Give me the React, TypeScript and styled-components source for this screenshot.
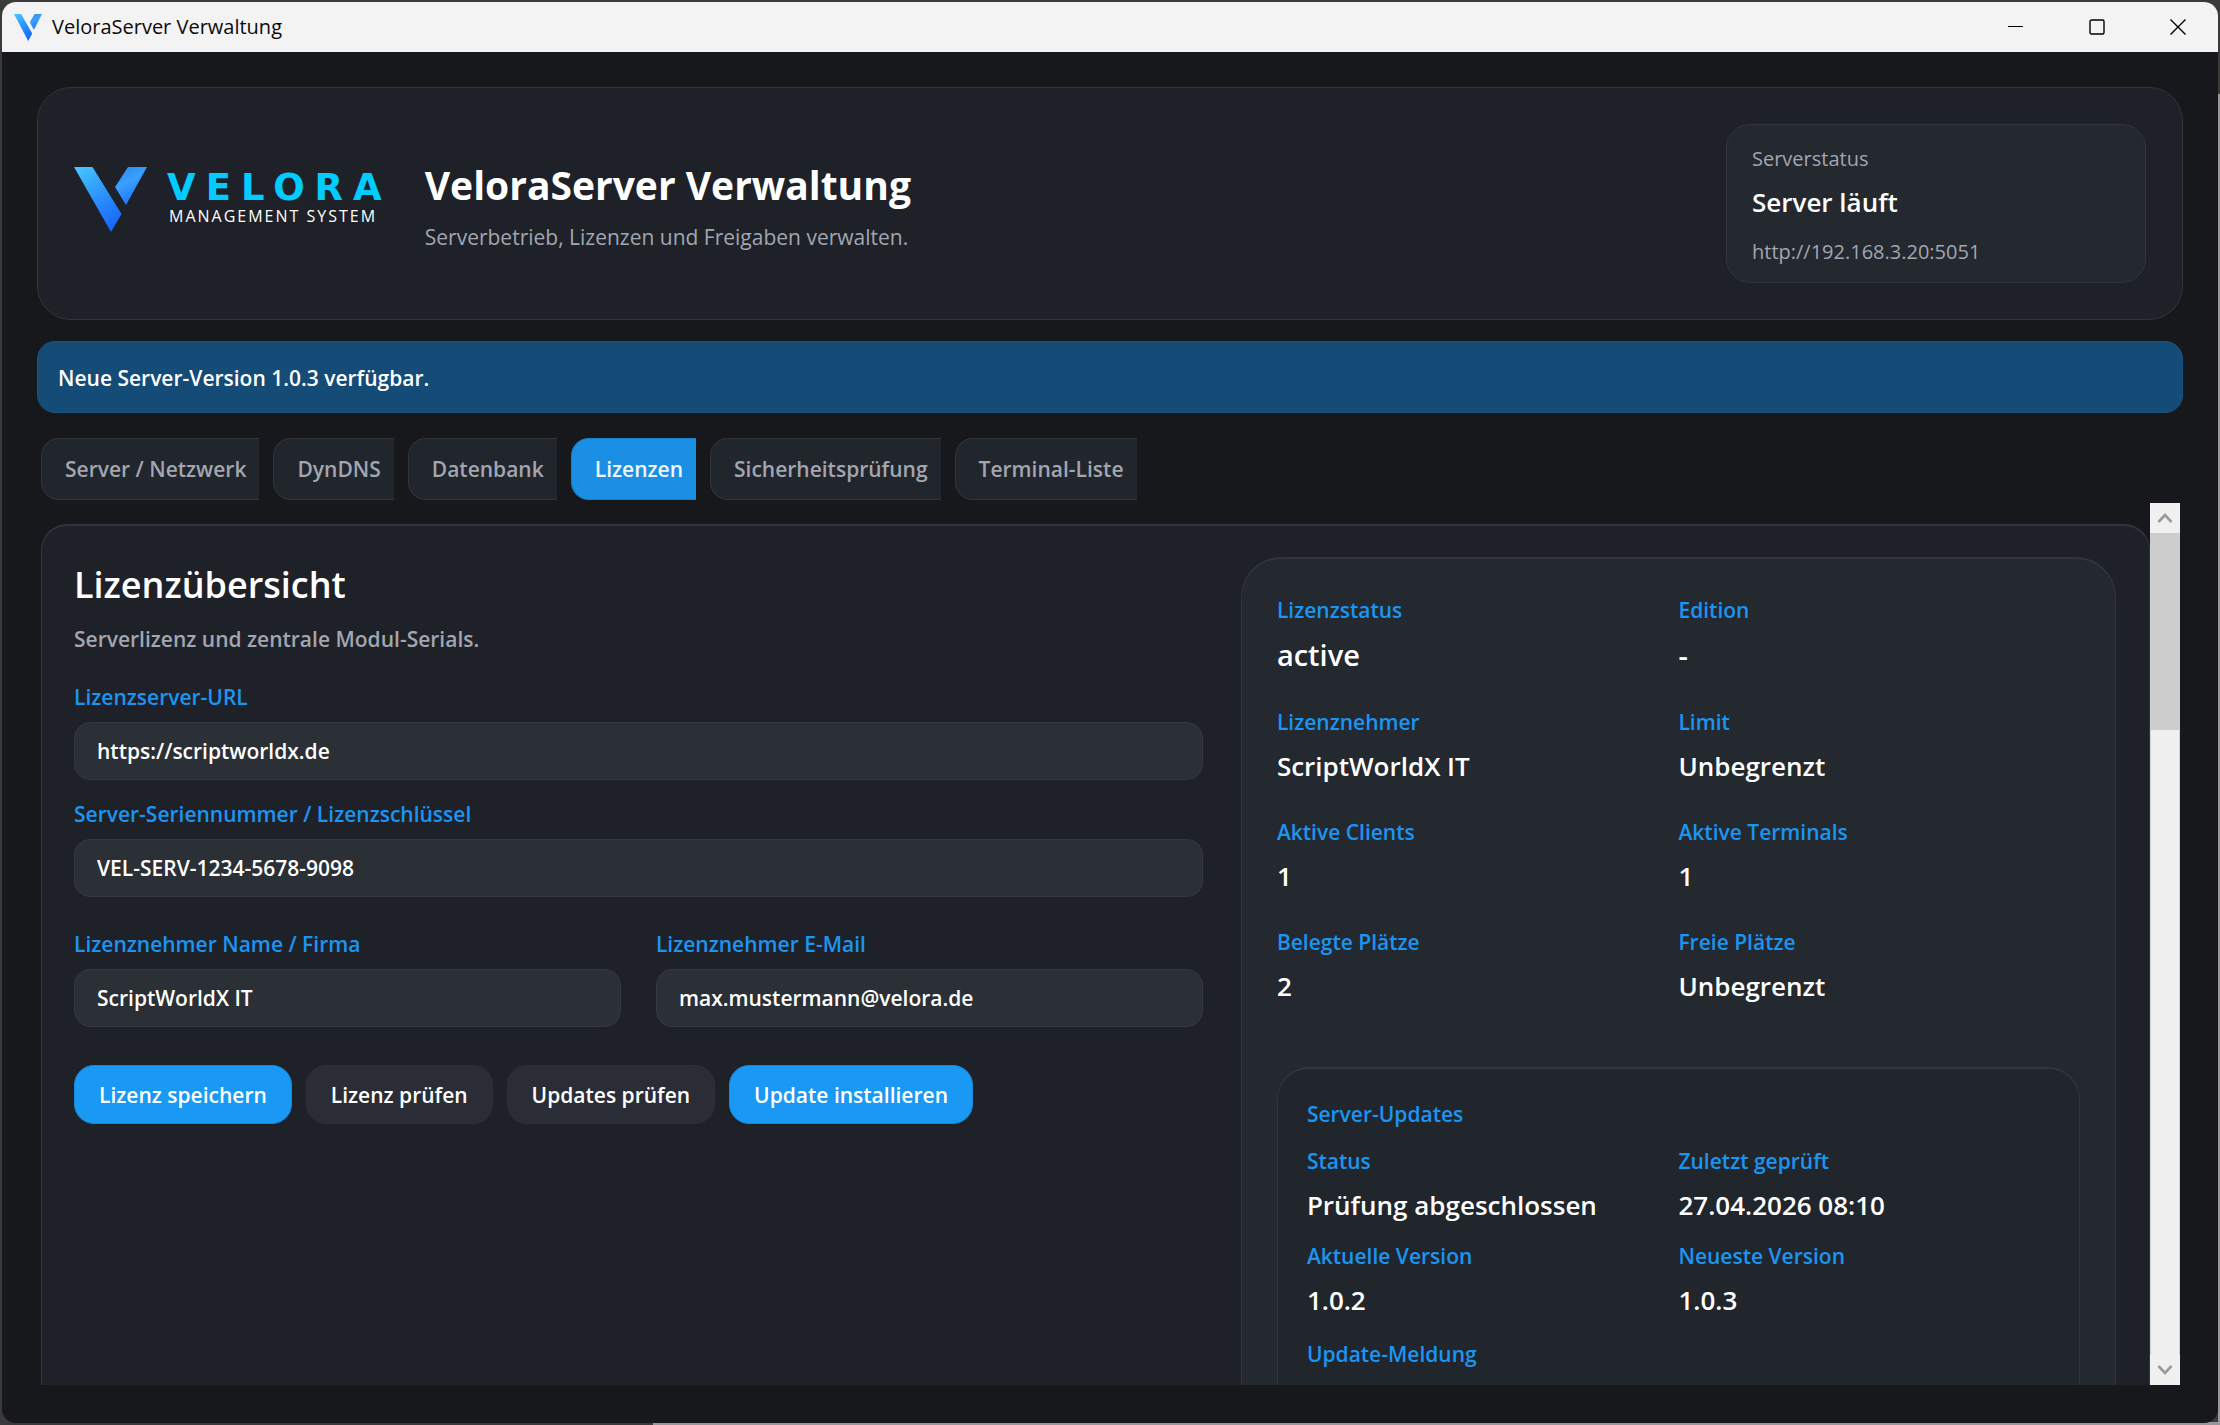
import React, { useRef } from "react";
import styled, { createGlobalStyle } from "styled-components";

const font = `"Open Sans", "Noto Sans", sans-serif`;

const color = {
  window: "#17181c",
  card: "#1f2128",
  raised: "#24282f",
  inset: "#21252c",
  field: "#2b2f36",
  line: "#31353d",
  text: "#ffffff",
  muted: "#a1a6b1",
  accent: "#1b95f2",
  primary: "#1999f4",
};

const GlobalStyle = createGlobalStyle`
  *, *::before, *::after { box-sizing: border-box; }
  html, body, #root { height: 100%; }
  body { margin: 0; background: #3a3a3b; font-family: ${font}; color: ${color.text}; }
  h1, h2, h3, h4, p, dl, dd { margin: 0; }
  button, input { font-family: inherit; }
`;

/* Strip of desktop that shows around the rounded window */
const Desktop = styled.div`
  height: 100vh;
  min-height: 600px;
  padding: 2px;
  overflow: hidden;
  background:
    linear-gradient(90deg, #3a3a3b 29.4%, #98989b 29.4%) bottom / 100% 3px no-repeat,
    linear-gradient(180deg, #3a3a3b 94px, #98989b 94px) right / 2px 100% no-repeat,
    #3a3a3b;
`;

const Window = styled.div`
  height: 100%;
  display: flex;
  flex-direction: column;
  border-radius: 14px;
  overflow: hidden;
  background: ${color.window};
`;

const TitleBar = styled.header`
  flex: none;
  height: 50px;
  display: flex;
  align-items: center;
  padding-left: 12px;
  background: #f3f3f3;
  color: #0b0b0b;
`;

const WindowTitle = styled.span`
  flex: 1;
  margin-left: 10px;
  font-size: 20px;
  line-height: 28px;
`;

const WindowButton = styled.button`
  width: 81px;
  height: 50px;
  display: grid;
  place-items: center;
  padding: 0;
  border: 0;
  background: none;
  color: #000;
`;

const Main = styled.main`
  flex: 1;
  min-height: 0;
  display: flex;
  flex-direction: column;
  padding: 35px 35px 38px;
`;

const HeaderCard = styled.section`
  flex: none;
  display: flex;
  align-items: center;
  padding: 36px;
  border: 1px solid ${color.line};
  border-radius: 34px;
  background: #1e2128;
`;

const Logo = styled.div`
  display: flex;
  align-items: center;
  gap: 20px;
  padding-bottom: 8px;
  margin-right: 43px;
`;

const Wordmark = styled.div`
  display: flex;
  flex-direction: column;
  padding-bottom: 4px;
`;

const BrandName = styled.span`
  font-family: "DejaVu Sans", sans-serif;
  font-weight: 700;
  font-size: 37px;
  line-height: 36px;
  letter-spacing: 10px;
  margin-right: -10px;
  color: #00ccff;
`;

const BrandLine = styled.span`
  padding-left: 2px;
  font-size: 16px;
  line-height: 20px;
  letter-spacing: 2px;
`;

const Heading = styled.div`
  flex: 1;
  display: flex;
  flex-direction: column;
  gap: 7px;
`;

const PageTitle = styled.h1`
  font-size: 39px;
  line-height: 60px;
  font-weight: 700;
`;

const Lead = styled.p<{ $strong?: boolean }>`
  font-size: 21px;
  line-height: 30px;
  font-weight: ${(p) => (p.$strong ? 600 : 400)};
  color: ${color.muted};
`;

const StatusCard = styled.aside`
  width: 420px;
  padding: 20px 25px 16px;
  border: 1px solid ${color.line};
  border-radius: 24px;
  background: ${color.raised};
`;

const StatusNote = styled.p`
  font-size: 20px;
  line-height: 28px;
  color: ${color.muted};
`;

const StatusValue = styled.p`
  margin: 11px 0 18px;
  font-size: 26px;
  line-height: 36px;
  font-weight: 600;
`;

const Banner = styled.div`
  flex: none;
  margin-top: 21px;
  padding: 21px 20px 19px;
  border: 1px solid #175380;
  border-radius: 18px;
  background: #154b77;
  font-size: 21px;
  line-height: 30px;
  font-weight: 600;
`;

const TabArea = styled.div`
  flex: 1;
  min-height: 0;
  display: flex;
  flex-direction: column;
  margin-top: 25px;
  padding: 0 3px 0 4px;
`;

const TabBar = styled.div`
  flex: none;
  display: flex;
  gap: 14px;
  margin-bottom: 3px;
`;

const Tab = styled.button<{ $active: boolean }>`
  height: 62px;
  padding: 0 13px 0 23px;
  border: 1px solid ${(p) => (p.$active ? "#187fca" : color.line)};
  border-right: 0;
  border-radius: 18px 0 0 18px;
  background: ${(p) => (p.$active ? "#1a8fe4" : color.inset)};
  color: ${(p) => (p.$active ? "#f2f6fa" : color.muted)};
  font-size: 21px;
  line-height: 30px;
  font-weight: 600;
`;

const ScrollRow = styled.div`
  flex: 1;
  min-height: 0;
  display: flex;
`;

const Viewport = styled.div`
  flex: 1;
  min-width: 0;
  overflow: hidden;
  padding-top: 21px;
`;

const Panel = styled.section`
  display: grid;
  grid-template-columns: 1.29fr 1fr;
  gap: 38px;
  min-height: 150%;
  padding: 31px 33px 31px 32px;
  border: 1px solid ${color.line};
  border-top-width: 2px;
  border-radius: 26px;
  background: ${color.card};
`;

const Form = styled.form`
  display: flex;
  flex-direction: column;
`;

const SectionTitle = styled.h2`
  margin-bottom: 11px;
  font-size: 36px;
  line-height: 56px;
  font-weight: 600;
`;

const FieldStack = styled.div`
  display: flex;
  flex-direction: column;
  gap: 19px;
  margin: 28px 0 32px;
`;

const FieldPair = styled.div`
  display: grid;
  grid-template-columns: 1fr 1fr;
  gap: 35px;
`;

const Field = styled.div`
  display: flex;
  flex-direction: column;
  gap: 10px;
`;

const FieldLabel = styled.label`
  font-size: 21px;
  line-height: 30px;
  font-weight: 600;
  color: ${color.accent};
`;

const TextInput = styled.input`
  width: 100%;
  height: 58px;
  padding: 0 22px;
  border: 1px solid #343840;
  border-radius: 16px;
  outline: none;
  background: ${color.field};
  color: ${color.text};
  font-size: 21px;
  line-height: 30px;
  font-weight: 600;
`;

const Actions = styled.div`
  display: flex;
  gap: 14px;
  margin-top: 38px;
`;

const Button = styled.button<{ $primary?: boolean }>`
  height: 59px;
  padding: 0 24px;
  border: 1px solid ${(p) => (p.$primary ? "#1888d8" : "#2c3039")};
  border-radius: 20px;
  background: ${(p) => (p.$primary ? color.primary : "#2a2d36")};
  color: ${color.text};
  font-size: 21px;
  line-height: 30px;
  font-weight: 600;
`;

const InfoCard = styled.section`
  padding: 36px 35px;
  border: 1px solid ${color.line};
  border-top-width: 2px;
  border-radius: 40px;
  background: ${color.raised};
`;

const UpdateCard = styled.section`
  margin-top: 63px;
  min-height: 500px;
  padding: 30px 29px;
  border: 1px solid ${color.line};
  border-top-width: 2px;
  border-radius: 32px;
  background: ${color.inset};
`;

const CardTitle = styled.h3`
  margin-bottom: 17px;
  font-size: 21px;
  line-height: 30px;
  font-weight: 600;
  color: ${color.accent};
`;

const UpdateMessage = styled.div`
  margin-top: 21px;
`;

const Facts = styled.dl<{ $gap: number }>`
  display: grid;
  grid-template-columns: 1fr 1fr;
  row-gap: ${(p) => p.$gap}px;
`;

const Fact = styled.div`
  display: flex;
  flex-direction: column;
  gap: 11px;
`;

const FactName = styled.dt`
  font-size: 21px;
  line-height: 30px;
  font-weight: 600;
  color: ${color.accent};
`;

const FactValue = styled.dd<{ $large?: boolean }>`
  font-size: ${(p) => (p.$large ? 29 : 26)}px;
  line-height: ${(p) => (p.$large ? 38 : 36)}px;
  font-weight: 600;
`;

const ScrollBar = styled.div`
  flex: none;
  width: 30px;
  display: flex;
  flex-direction: column;
  background: #f0f0f0;
`;

const ScrollButton = styled.button`
  height: 30px;
  display: grid;
  place-items: center;
  padding: 0;
  border: 1px solid #c9c9c9;
  outline: 1px solid #f0f0f0;
  outline-offset: -1px;
  background: #f0f0f0;
  color: #9a9a9a;
`;

const Track = styled.div`
  flex: 1;
  box-shadow: inset 1px 0 #d0d0d0, inset -1px 0 #d0d0d0;
`;

const Thumb = styled.div`
  height: 24%;
  background: #cdcdcd;
`;

function Mark({ id, width, height }: { id: string; width: number; height: number }) {
  return (
    <svg width={width} height={height} viewBox="0 0 73 65" preserveAspectRatio="none" aria-hidden="true">
      <defs>
        <linearGradient id={`${id}-long`} x1="0.2" y1="0" x2="0.7" y2="1">
          <stop offset="0" stopColor="#45c2ff" />
          <stop offset="0.5" stopColor="#2b92fb" />
          <stop offset="1" stopColor="#1767fb" />
        </linearGradient>
        <linearGradient id={`${id}-short`} x1="0.2" y1="0.1" x2="0.6" y2="1">
          <stop offset="0" stopColor="#2f8ef2" />
          <stop offset="0.35" stopColor="#3aa0fd" />
          <stop offset="1" stopColor="#1870fb" />
        </linearGradient>
      </defs>
      <path d="M0 0H18.5L47.5 47L37 65Z" fill={`url(#${id}-long)`} />
      <path d="M54 0H73L52 38L41 20Z" fill={`url(#${id}-short)`} />
    </svg>
  );
}

const tabs = ["Server / Netzwerk", "DynDNS", "Datenbank", "Lizenzen", "Sicherheitsprüfung", "Terminal-Liste"];

const licence = [
  { name: "Lizenzstatus", value: "active", large: true },
  { name: "Edition", value: "-", large: true },
  { name: "Lizenznehmer", value: "ScriptWorldX IT" },
  { name: "Limit", value: "Unbegrenzt" },
  { name: "Aktive Clients", value: "1" },
  { name: "Aktive Terminals", value: "1" },
  { name: "Belegte Plätze", value: "2" },
  { name: "Freie Plätze", value: "Unbegrenzt" },
];

const updates = [
  { name: "Status", value: "Prüfung abgeschlossen" },
  { name: "Zuletzt geprüft", value: "27.04.2026 08:10" },
  { name: "Aktuelle Version", value: "1.0.2" },
  { name: "Neueste Version", value: "1.0.3" },
];

function FactList({ items, gap }: { items: { name: string; value: string; large?: boolean }[]; gap: number }) {
  return (
    <Facts $gap={gap}>
      {items.map((f) => (
        <Fact key={f.name}>
          <FactName>{f.name}</FactName>
          <FactValue $large={f.large}>{f.value}</FactValue>
        </Fact>
      ))}
    </Facts>
  );
}

function LabeledInput({ id, label, value, type = "text" }: { id: string; label: string; value: string; type?: string }) {
  return (
    <Field>
      <FieldLabel htmlFor={id}>{label}</FieldLabel>
      <TextInput id={id} type={type} defaultValue={value} spellCheck={false} />
    </Field>
  );
}

export default function App() {
  const view = useRef<HTMLDivElement>(null);
  const scroll = (dy: number) => view.current?.scrollBy({ top: dy });

  return (
    <Desktop>
      <GlobalStyle />
      <Window>
        <TitleBar>
          <Mark id="app" width={28} height={27} />
          <WindowTitle>VeloraServer Verwaltung</WindowTitle>
          <WindowButton aria-label="Minimieren">
            <svg width="16" height="16" viewBox="0 0 16 16" stroke="currentColor" fill="none">
              <path d="M0 7.5H15" />
            </svg>
          </WindowButton>
          <WindowButton aria-label="Maximieren">
            <svg width="16" height="16" viewBox="0 0 16 16" stroke="currentColor" fill="none">
              <rect x="1" y="1" width="14" height="14" rx="1.5" strokeWidth="1.4" />
            </svg>
          </WindowButton>
          <WindowButton aria-label="Schließen">
            <svg width="16" height="16" viewBox="0 0 16 16" stroke="currentColor" fill="none">
              <path d="M0.5 0.5L15.5 15.5M15.5 0.5L0.5 15.5" strokeWidth="1.4" />
            </svg>
          </WindowButton>
        </TitleBar>

        <Main>
          <HeaderCard>
            <Logo>
              <Mark id="brand" width={73} height={65} />
              <Wordmark>
                <BrandName>VELORA</BrandName>
                <BrandLine>MANAGEMENT SYSTEM</BrandLine>
              </Wordmark>
            </Logo>
            <Heading>
              <PageTitle>VeloraServer Verwaltung</PageTitle>
              <Lead>Serverbetrieb, Lizenzen und Freigaben verwalten.</Lead>
            </Heading>
            <StatusCard>
              <StatusNote>Serverstatus</StatusNote>
              <StatusValue>Server läuft</StatusValue>
              <StatusNote>http://192.168.3.20:5051</StatusNote>
            </StatusCard>
          </HeaderCard>

          <Banner role="status">Neue Server-Version 1.0.3 verfügbar.</Banner>

          <TabArea>
            <TabBar role="tablist">
              {tabs.map((t) => (
                <Tab key={t} role="tab" aria-selected={t === "Lizenzen"} $active={t === "Lizenzen"}>
                  {t}
                </Tab>
              ))}
            </TabBar>

            <ScrollRow>
              <Viewport ref={view}>
                <Panel>
                  <Form onSubmit={(e) => e.preventDefault()}>
                    <SectionTitle>Lizenzübersicht</SectionTitle>
                    <Lead $strong>Serverlizenz und zentrale Modul-Serials.</Lead>
                    <FieldStack>
                      <LabeledInput id="url" label="Lizenzserver-URL" value="https://scriptworldx.de" />
                      <LabeledInput id="serial" label="Server-Seriennummer / Lizenzschlüssel" value="VEL-SERV-1234-5678-9098" />
                    </FieldStack>
                    <FieldPair>
                      <LabeledInput id="owner" label="Lizenznehmer Name / Firma" value="ScriptWorldX IT" />
                      <LabeledInput id="mail" label="Lizenznehmer E-Mail" value="max.mustermann@velora.de" type="email" />
                    </FieldPair>
                    <Actions>
                      <Button type="submit" $primary>Lizenz speichern</Button>
                      <Button type="button">Lizenz prüfen</Button>
                      <Button type="button">Updates prüfen</Button>
                      <Button type="button" $primary>Update installieren</Button>
                    </Actions>
                  </Form>

                  <InfoCard>
                    <FactList items={licence} gap={33} />
                    <UpdateCard>
                      <CardTitle>Server-Updates</CardTitle>
                      <FactList items={updates} gap={18} />
                      <UpdateMessage>
                        <CardTitle as="h4">Update-Meldung</CardTitle>
                      </UpdateMessage>
                    </UpdateCard>
                  </InfoCard>
                </Panel>
              </Viewport>

              <ScrollBar>
                <ScrollButton aria-label="Nach oben" onClick={() => scroll(-80)}>
                  <svg width="16" height="12" viewBox="0 0 16 12" fill="none" stroke="currentColor" strokeWidth="2.6">
                    <path d="M1.5 10L8 3L14.5 10" />
                  </svg>
                </ScrollButton>
                <Track>
                  <Thumb />
                </Track>
                <ScrollButton aria-label="Nach unten" onClick={() => scroll(80)}>
                  <svg width="16" height="12" viewBox="0 0 16 12" fill="none" stroke="currentColor" strokeWidth="2.6">
                    <path d="M1.5 2L8 9L14.5 2" />
                  </svg>
                </ScrollButton>
              </ScrollBar>
            </ScrollRow>
          </TabArea>
        </Main>
      </Window>
    </Desktop>
  );
}
